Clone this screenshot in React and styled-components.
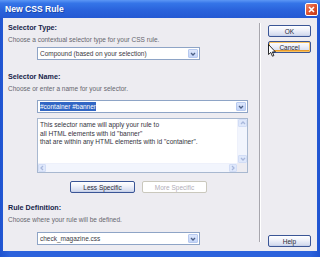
import React from 'react';
import styled, { createGlobalStyle } from 'styled-components';

const GlobalStyle = createGlobalStyle`
  html, body { margin: 0; padding: 0; background: #fff; }
  body { font-family: Tahoma, "Liberation Sans", Arial, sans-serif; }
`;

const Window = styled.div`
  position: relative;
  width: 320px;
  height: 257px;
  box-sizing: border-box;
  display: flex;
  flex-direction: column;
  background: linear-gradient(90deg, #1f53d0, #2c62dc 3%, #2c62dc 97%, #1f53d0);
  overflow: hidden;
`;

const TitleBar = styled.div`
  height: 18px;
  flex-shrink: 0;
  display: flex;
  align-items: center;
  justify-content: space-between;
  padding: 0 2px 0 5px;
  background: linear-gradient(#5c97f5 0%, #3575e8 18%, #2a63dc 55%, #2459d3 100%);
  color: #fff;
  font-weight: bold;
  font-size: 8.6px;
  text-shadow: 1px 1px 0 #1a45a8;
`;

const CloseButton = styled.div`
  width: 13px;
  height: 13px;
  box-sizing: border-box;
  border: 1px solid #fff;
  border-radius: 2px;
  background: linear-gradient(135deg, #f0866a, #e0522e 50%, #c33b1a);
  display: flex;
  align-items: center;
  justify-content: center;
`;

const Body = styled.div`
  flex: 1;
  margin: 0 3px 6px;
  background: #edecf1;
  display: flex;
`;

const Main = styled.div`
  width: 256px;
  box-sizing: border-box;
  padding: 4px 0 0 5px;
  display: flex;
  flex-direction: column;
`;

const Separator = styled.div`
  width: 1px;
  margin: 5px 0 9px;
  background: #a7a6ad;
  border-right: 1px solid #fff;
`;

const Side = styled.div`
  flex: 1;
  display: flex;
  flex-direction: column;
  padding: 7px 0 4px 7px;
  gap: 4px;
`;

const Label = styled.div`
  font-size: 7.2px;
  font-weight: bold;
  line-height: 12px;
  color: #17244a;
  margin-top: ${p => p.$top || 0}px;
`;

const Desc = styled.div`
  font-size: 6.5px;
  line-height: 12px;
  color: #66666e;
`;

const Combo = styled.div`
  margin: ${p => p.$top || 0}px 0 0 29px;
  width: ${p => p.$width}px;
  height: 13px;
  box-sizing: border-box;
  border: 1px solid #8ea4c6;
  background: #fff;
  display: flex;
  align-items: stretch;
`;

const ComboText = styled.div`
  flex: 1;
  padding: 0 2px;
  font-size: 6.5px;
  line-height: 11px;
  color: #3a3a44;
  white-space: nowrap;
  overflow: hidden;
`;

const Selected = styled.span`
  background: #3166c4;
  color: #fff;
  padding: 1px 0;
`;

const ArrowBox = styled.div`
  width: 10px;
  margin: 1px;
  box-sizing: border-box;
  border: 1px solid #b7c9ef;
  border-radius: 1px;
  background: linear-gradient(#dde7fc, #c3d4f8);
  display: flex;
  align-items: center;
  justify-content: center;
`;

const TextBox = styled.div`
  margin: 5px 0 0 29px;
  width: 211px;
  height: 55px;
  box-sizing: border-box;
  border: 1px solid #a8b8d0;
  background: #fff;
  display: grid;
  grid-template-columns: 1fr 10px;
  grid-template-rows: 1fr 9px;
`;

const TextContent = styled.div`
  padding: 2px 2px 0;
  font-size: 6.6px;
  line-height: 8.5px;
  color: #34343e;
  white-space: nowrap;
  overflow: hidden;
`;

const ScrollTrack = styled.div`
  background: #f2f5fd;
  display: flex;
  flex-direction: ${p => (p.$vertical ? 'column' : 'row')};
  justify-content: space-between;
  border-${p => (p.$vertical ? 'left' : 'top')}: 1px solid #eef1fb;
`;

const ScrollArrow = styled.div`
  width: ${p => (p.$vertical ? '9px' : '8px')};
  height: 8px;
  box-sizing: border-box;
  border: 1px solid #d2ddf6;
  border-radius: 1px;
  background: #dfe8fb;
  display: flex;
  align-items: center;
  justify-content: center;
`;

const Corner = styled.div`
  background: #edecf1;
`;

const ButtonRow = styled.div`
  margin: 8px 0 0 62px;
  display: flex;
  gap: 7px;
`;

const Button = styled.div`
  width: ${p => p.$width || 43}px;
  height: ${p => p.$height || 12}px;
  box-sizing: border-box;
  border: 1px solid ${p => (p.$disabled ? '#cac8bd' : '#3a5596')};
  border-radius: 2px;
  background: ${p => (p.$disabled ? '#fff' : 'linear-gradient(#ffffff 0%, #f0f2fa 40%, #d6ddf0 85%, #c2cce6 100%)')};
  box-shadow: ${p => (p.$focus ? 'inset 0 0 0 1px #f7c262, inset 0 -1px 0 1px #e99b2c' : 'none')};
  color: ${p => (p.$disabled ? '#b0aeb8' : '#2a2a36')};
  font-size: 6.5px;
  display: flex;
  align-items: center;
  justify-content: center;
  margin-top: ${p => (p.$bottom ? 'auto' : '0')};
`;

const Pointer = styled.svg`
  position: absolute;
  left: 268px;
  top: 44px;
`;

const Chevron = ({ dir = 'down', color = '#4b5f86' }) => {
  const paths = {
    down: 'M1 2 L3 4 L5 2',
    up: 'M1 4 L3 2 L5 4',
    left: 'M4 1 L2 3 L4 5',
    right: 'M2 1 L4 3 L2 5',
  };
  return (
    <svg width="6" height="6" viewBox="0 0 6 6">
      <path d={paths[dir]} fill="none" stroke={color} strokeWidth="1.3" />
    </svg>
  );
};

export default function App() {
  return (
    <>
      <GlobalStyle />
      <Window>
        <TitleBar>
          <span>New CSS Rule</span>
          <CloseButton>
            <svg width="7" height="7" viewBox="0 0 7 7">
              <path d="M1 1 L6 6 M6 1 L1 6" stroke="#fff" strokeWidth="1.6" />
            </svg>
          </CloseButton>
        </TitleBar>
        <Body>
          <Main>
            <Label>Selector Type:</Label>
            <Desc>Choose a contextual selector type for your CSS rule.</Desc>
            <Combo $width={163} $top={1}>
              <ComboText>Compound (based on your selection)</ComboText>
              <ArrowBox><Chevron /></ArrowBox>
            </Combo>

            <Label $top={11}>Selector Name:</Label>
            <Desc>Choose or enter a name for your selector.</Desc>
            <Combo $width={211} $top={5}>
              <ComboText><Selected>#container #banner</Selected></ComboText>
              <ArrowBox><Chevron /></ArrowBox>
            </Combo>
            <TextBox>
              <TextContent>
                This selector name will apply your rule to<br />
                all HTML elements with id "banner"<br />
                that are within any HTML elements with id "container".
              </TextContent>
              <ScrollTrack $vertical>
                <ScrollArrow $vertical><Chevron dir="up" color="#a9b8dc" /></ScrollArrow>
                <ScrollArrow $vertical><Chevron dir="down" color="#a9b8dc" /></ScrollArrow>
              </ScrollTrack>
              <ScrollTrack>
                <ScrollArrow><Chevron dir="left" color="#a9b8dc" /></ScrollArrow>
                <ScrollArrow><Chevron dir="right" color="#a9b8dc" /></ScrollArrow>
              </ScrollTrack>
              <Corner />
            </TextBox>
            <ButtonRow>
              <Button $width={65}>Less Specific</Button>
              <Button $width={65} $disabled>More Specific</Button>
            </ButtonRow>

            <Label $top={9}>Rule Definition:</Label>
            <Desc>Choose where your rule will be defined.</Desc>
            <Combo $width={163} $top={6}>
              <ComboText>check_magazine.css</ComboText>
              <ArrowBox><Chevron /></ArrowBox>
            </Combo>
          </Main>
          <Separator />
          <Side>
            <Button>OK</Button>
            <Button $focus>Cancel</Button>
            <Button $bottom>Help</Button>
          </Side>
        </Body>
        <Pointer width="8" height="13" viewBox="0 0 8 13">
          <path d="M0.5 0.5 L0.5 10.5 L2.8 8.4 L4.4 12.2 L5.9 11.6 L4.4 7.9 L7.4 7.9 Z" fill="#fff" stroke="#000" strokeWidth="0.8" />
        </Pointer>
      </Window>
    </>
  );
}
